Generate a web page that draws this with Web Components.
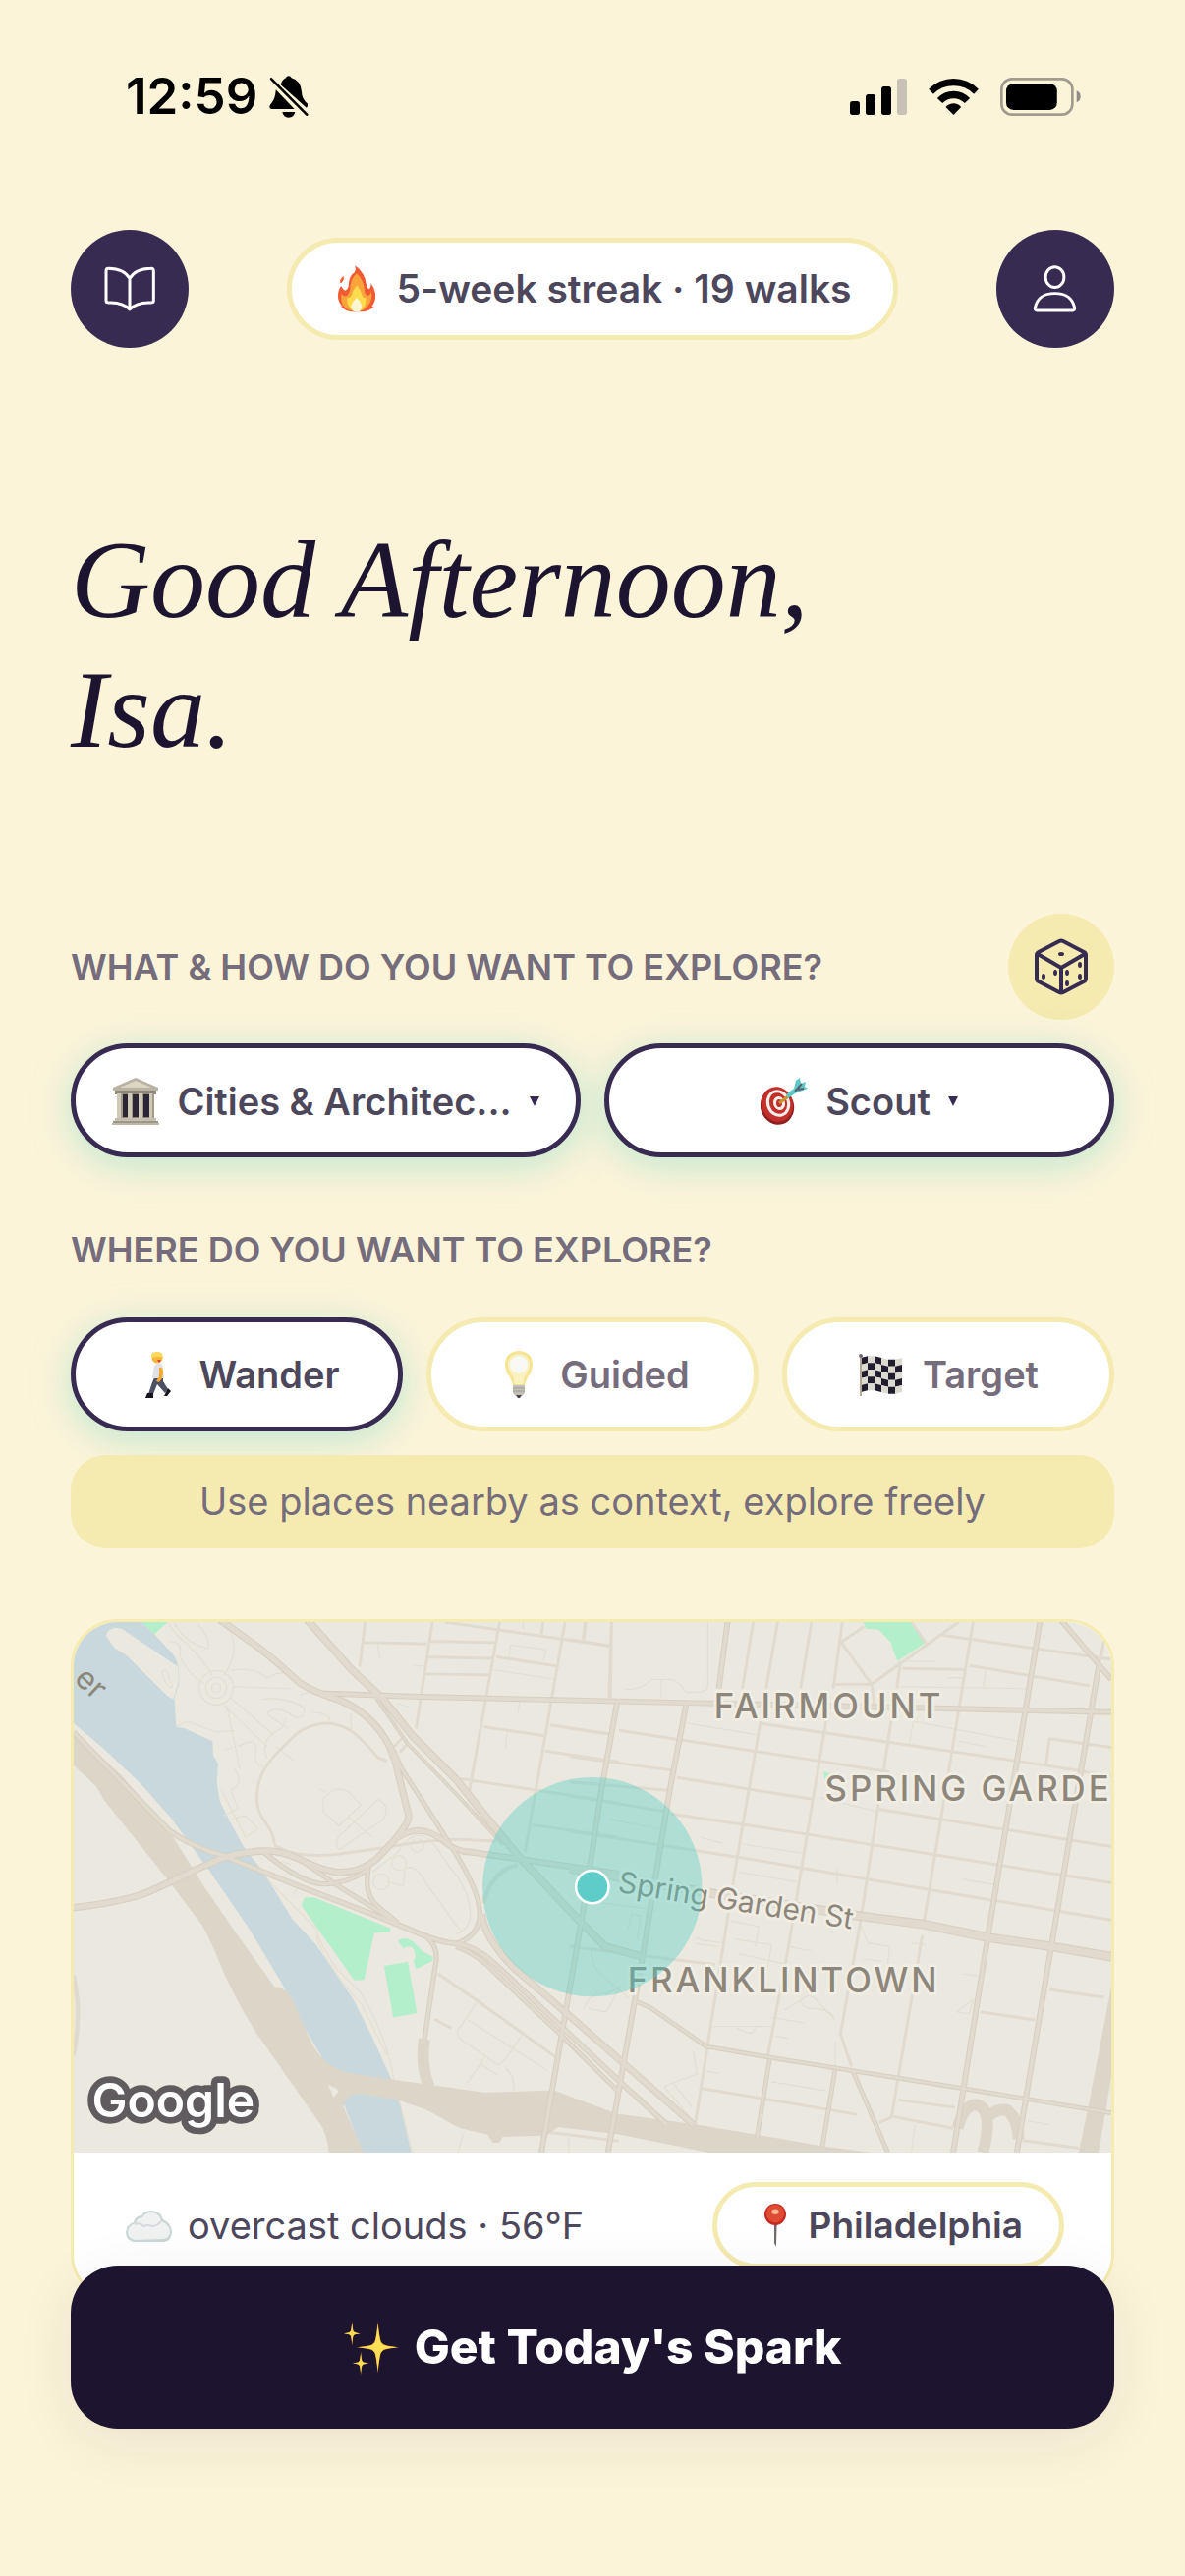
<!DOCTYPE html>
<html lang="en">
<head>
<meta charset="utf-8">
<meta name="viewport" content="width=device-width">
<title>Spark Walks</title>
<style>
  html, body { margin: 0; min-height: 100%; background: #fcf4d9; }
  body { font-family: Inter, "Noto Sans", sans-serif; color: #4d475c; }
</style>
</head>
<body>
<spark-app></spark-app>
<script>
const define = (name, html, setup) => customElements.define(name, class extends HTMLElement {
  connectedCallback() {
    if (this.shadowRoot) return;
    const root = this.attachShadow({ mode: 'open' });
    const t = document.createElement('template');
    t.innerHTML = typeof html === 'function' ? html(this) : html;
    root.append(t.content.cloneNode(true));
    if (setup) setup(this, root);
  }
});

/* ---------- icons ---------- */
const star = (x, y, w, h) => {
  const a = w * .2, b = h * .17;
  return `M${x} ${y - h}Q${x + a * .5} ${y - b} ${x + a} ${y - b}Q${x + a} ${y - b * .4} ${x + w} ${y}Q${x + a} ${y + b * .4} ${x + a} ${y + b}Q${x + a * .5} ${y + b} ${x} ${y + h}Q${x - a * .5} ${y + b} ${x - a} ${y + b}Q${x - a} ${y + b * .4} ${x - w} ${y}Q${x - a} ${y - b * .4} ${x - a} ${y - b}Q${x - a * .5} ${y - b} ${x} ${y - h}Z`;
};
const flag = () => {
  let s = '';
  const wave = x => 2 * Math.sin((x - 3) / 42 * Math.PI * 2);
  for (let r = 0; r < 5; r++) for (let c = 0; c < 6; c++) {
    const x = 3 + c * 7, x2 = x + 7, y = 7 + r * 7, a = wave(x), b = wave(x2);
    s += `<path d="M${x} ${y - a}L${x2} ${y - b}V${y + 7 - b}L${x} ${y + 7 - a}Z" fill="${(r + c) % 2 ? '#dddad2' : '#211d2c'}"/>`;
  }
  return s;
};
const ICONS = {
  bell: ['643 50 120 130', `<path d="M678 78Q682 61 694 57Q695 51 702 51Q709 51 711 57Q738 64 742 98Q743 122 760 136Q762 144 757 149ZM663 93L720 153H652Q642 153 644 144Q645 139 650 134Q661 122 663 93ZM683 162H722Q719 179 702 179Q686 179 683 162Z"/><path d="M649 60L758 170" stroke="#000" stroke-width="8" stroke-linecap="round"/>`],
  signal: ['45 57 174 111', `<rect x="45" y="126" width="30" height="42" rx="8"/><rect x="93" y="105" width="30" height="63" rx="8"/><rect x="141" y="81" width="30" height="87" rx="8"/><rect x="189" y="57" width="30" height="111" rx="8" fill="#c8c1b5"/>`],
  wifi: ['286 57 152 111', `<path d="M286 89Q318 57 362 57Q406 57 438 89L424 104Q398 79 362 79Q326 79 300 104ZM312 117Q333 95 362 95Q391 95 412 117L396 132Q382 118 362 118Q342 118 328 132ZM338 144Q348 133 362 133Q376 133 385 144L362 168Z"/>`],
  battery: ['504 54 247 117', `<rect x="508" y="58" width="217" height="109" rx="32" fill="none" stroke="#a19a8f" stroke-width="8"/><rect x="522" y="72" width="156" height="81" rx="22"/><path d="M738 94Q750 99 750 112Q750 125 738 130Z" fill="#8f8988"/>`],
  book: ['138 632 156 138', `<path d="M216 670Q200 640 151 639Q144 639 144 647V736Q144 743 152 743Q195 741 216 764Q237 741 280 743Q289 743 289 736V647Q289 638 281 639Q232 640 216 670V764" fill="none" stroke="#fff" stroke-width="9" stroke-linejoin="round"/>`],
  person: ['602 626 140 152', `<ellipse cx="672" cy="666" rx="28.500" ry="31.500" fill="none" stroke="#fff" stroke-width="9"/><path d="M617 769Q609 769 611 760Q620 716 672 716Q724 716 733 760Q735 769 727 769Z" fill="none" stroke="#fff" stroke-width="9"/>`],
  dice: ['0 0 54 58', `<g fill="none" stroke="#382b52" stroke-width="4" stroke-linejoin="round"><path d="M25 3Q27 2 29 3L50 14Q52 15 52 17V41Q52 43 50 44L29 55Q27 56 25 55L4 44Q2 43 2 41V17Q2 15 4 14ZM3 16L27 30L51 16M27 30V55"/></g><g fill="#382b52"><ellipse cx="27" cy="16" rx="3" ry="2"/><ellipse cx="9" cy="39" rx="2" ry="3"/><ellipse cx="21" cy="35" rx="2" ry="3"/><ellipse cx="33" cy="35" rx="2" ry="3"/><ellipse cx="33" cy="46" rx="2" ry="3"/><ellipse cx="46" cy="27" rx="2" ry="3"/><ellipse cx="46" cy="39" rx="2" ry="3"/></g>`],
  fire: ['840 629 144 144', `<path d="M907 630Q938 652 942 690Q944 700 950 702Q957 696 955 683Q966 697 969 715Q971 740 958 755L965 754Q950 771 925 771H895Q875 768 862 752L870 755Q854 742 855 718Q857 700 865 692Q870 705 878 706Q888 700 888 682Q890 660 906 650Q911 642 907 630Z" fill="#f15a32"/><path d="M873 662Q874 674 866 682Q862 686 861 679Q862 668 873 662Z" fill="#f15a32"/><path d="M912 654Q932 672 935 700Q937 722 947 722Q956 718 957 708Q962 735 947 752Q935 770 912 770Q885 770 871 752Q862 738 866 716Q872 726 882 722Q893 712 893 690Q896 668 912 654Z" fill="#f9a33b"/><path d="M913 690Q926 708 930 724Q935 731 940 728Q942 750 930 762Q912 775 893 762Q880 748 884 728Q892 730 897 718Q902 702 913 690Z" fill="#fddb4d"/><path d="M912 728Q930 745 927 760Q924 771 911 771Q898 771 895 759Q894 745 912 728Z" fill="#fdf6d2"/>`],
  temple: ['0 0 48 48', `<path d="M24 0L47 10V13H1V10Z" fill="#b9b3a4"/><path d="M24 3L40 10H8Z" fill="#dcd6c2"/><path d="M3 13H45V17H3Z" fill="#8f897c"/><path d="M5 17H43V41H5Z" fill="#8d8678"/><path d="M11 17H16V40H11ZM21 17H27V40H21ZM32 17H38V40H32Z" fill="#2a2635"/><g fill="#cfc9b8"><path d="M5 16H11V42H5ZM16 16H21V42H16ZM27 16H32V42H27ZM38 16H43V42H38Z"/></g><g fill="#a29b8c"><path d="M9 16H11V42H9ZM20 16H21V42H20ZM31 16H32V42H31ZM41 16H43V42H41Z"/></g><path d="M3 41H45V44H3Z" fill="#c5bfae"/><path d="M1 44H47V46H1Z" fill="#9d978a"/><path d="M0 46H48V48H0Z" fill="#bdb7a7"/>`],
  dart: ['0 0 48 48', `<ellipse cx="17" cy="29" rx="17" ry="19" transform="rotate(-18 17 29)" fill="#8d1f1e"/><ellipse cx="17" cy="27" rx="16" ry="18" transform="rotate(-18 17 27)" fill="#c3302b"/><ellipse cx="18" cy="26" rx="12" ry="14" transform="rotate(-18 18 26)" fill="#f4eeea"/><ellipse cx="18" cy="26" rx="9" ry="11" transform="rotate(-18 18 26)" fill="#c3302b"/><ellipse cx="19" cy="26" rx="6" ry="7" transform="rotate(-18 19 26)" fill="#f4eeea"/><ellipse cx="19" cy="26" rx="3" ry="4" fill="#c3302b"/><path d="M19 26L28 19" stroke="#c9942c" stroke-width="3"/><path d="M26 17L34 11L36 3L40 0L41 6L46 4L45 9L48 11L40 14L35 16L28 21Z" fill="#5cc9c6"/><path d="M35 14L42 6M38 12L44 11" stroke="#59606f" stroke-width="2"/>`],
  walker: ['0 0 48 48', `<path d="M22 25L19 32L15 44H20L24 34L32 43L35 39L30 31L30 25Z" fill="#4c5062"/><path d="M12 48L14 43H20V48H12ZM31 46L35 38L38 41L34 46Z" fill="#16131d"/><path d="M23 13Q30 11 30 18L31 28H19L20 22Q20 15 23 13Z" fill="#dfe1e6"/><path d="M26 17Q30 16 30 22L29 28L26 32L23 31L26 26Z" fill="#f2a92f"/><circle cx="24" cy="7" r="5.500" fill="#f7b53c"/><path d="M18 7Q17 1 23 1Q30 0 30 7Q29 9 28 6Q24 6 18 7Z" fill="#fbd75b"/><path d="M24 9H28L26 12Z" fill="#d9423a"/>`],
  bulb: ['0 0 48 48', `<path d="M24 0Q10 1 10 14Q10 21 15 27Q17 31 18 35H30Q31 31 33 27Q38 21 38 14Q38 1 24 0Z" fill="#f5e493"/><path d="M24 3Q13 4 13 14Q13 20 18 26L20 34H28L30 26Q35 20 35 14Q35 4 24 3Z" fill="#faf1c0"/><circle cx="24" cy="14" r="9" fill="#f8f8f4"/><path d="M18 35H30V43L27 46H21L18 43Z" fill="#c4c0b9"/><path d="M18 38H30M18 41H30" stroke="#a09b94"/><path d="M21 45H27L25 48H23Z" fill="#4b4750"/>`],
  flag: ['0 0 48 48', flag() + `<path d="M3 5V46" stroke="#b5a898" stroke-width="2"/><circle cx="3" cy="5" r="2" fill="#6e6a78"/>`],
  cloud: ['0 0 48 48', `<path d="M9 41Q1 39 1 31Q2 23 9 21Q10 15 17 14Q20 9 28 9Q37 10 39 18Q47 22 48 30Q48 40 40 41Z" fill="#cbd7d7"/><path d="M10 39Q3 37 3 31Q4 24 11 22Q12 17 18 16Q21 11 28 11Q36 12 37 20Q45 23 46 30Q46 37 39 38Z" fill="#f0f1f1"/><path d="M10 23Q15 21 19 25Q23 23 28 25Q34 24 37 20" fill="none" stroke="#d5d9db" stroke-width="2"/>`],
  pin: ['0 0 48 48', `<path d="M23 18H26L25 47H24Z" fill="#8b8580"/><path d="M24 18V45" stroke="#6b6563" stroke-width="2"/><ellipse cx="24" cy="12" rx="12" ry="12" fill="#c42a22"/><ellipse cx="24" cy="11" rx="10" ry="10" fill="#e04b33"/><ellipse cx="24" cy="9" rx="4" ry="3" fill="#f6b48e"/>`],
  sparkles: ['718 390 170 170', `<g fill="#d98f2c"><path d="${star(743, 433, 26, 38)}"/><path d="${star(823, 476, 66, 80)}"/><path d="${star(770, 525, 26, 36)}"/></g><g fill="#ffdf56"><path d="${star(743, 433, 24, 32)}"/><path d="${star(823, 476, 60, 72)}"/><path d="${star(770, 525, 24, 30)}"/><circle cx="823" cy="476" r="18"/><circle cx="743" cy="433" r="7"/><circle cx="770" cy="525" r="7"/></g>`]
};
define('ui-icon', el => {
  const [box, art] = ICONS[el.getAttribute('name')];
  return `<style>:host{display:block;flex:none;width:48px;height:48px}svg{display:block;width:100%;height:100%}</style><svg viewBox="${box}" aria-hidden="true">${art}</svg>`;
});

/* ---------- bars and headings ---------- */
define('status-bar', `<style>
  :host{display:flex;align-items:center;justify-content:space-between;height:196px;padding:0 34px 0 56px;color:#000}
  .side{display:flex;align-items:center}
  .time{font-size:51px;font-weight:600;line-height:60px;margin-right:12px}
  .bell{width:40px;height:43px}.signal{width:58px;height:37px}.wifi{width:51px;height:37px}.battery{width:82px;height:39px}
  .right{gap:22px}
</style>
<div class="side"><span class="time">12:59</span><ui-icon class="bell" name="bell"></ui-icon></div>
<div class="side right"><ui-icon class="signal" name="signal"></ui-icon><ui-icon class="wifi" name="wifi"></ui-icon><ui-icon class="battery" name="battery"></ui-icon></div>`);

define('round-button', el => `<style>
  :host{display:block}
  button{display:flex;align-items:center;justify-content:center;width:var(--size,120px);height:var(--size,120px);border:0;border-radius:50%;padding:0;background:var(--fill,#382b52)}
  ui-icon{width:var(--icon-w,52px);height:var(--icon-h,50px)}
</style><button type="button" aria-label="${el.getAttribute('label')}"><ui-icon name="${el.getAttribute('icon')}"></ui-icon></button>`);

define('streak-badge', `<style>
  :host{display:flex;align-items:center;gap:16px;box-sizing:border-box;height:104px;padding:0 42px;border:5px solid #f5eab0;border-radius:52px;background:#fff;font-size:39px;font-weight:600;line-height:48px;white-space:nowrap}
</style><ui-icon name="fire"></ui-icon><span><slot></slot></span>`);

define('app-header', `<style>:host{display:flex;align-items:center;justify-content:space-between;margin-top:38px}</style><slot></slot>`);

define('greeting-title', `<style>
  h1{margin:170px 0 142px;font:italic 400 112px/132px "Liberation Serif",serif;color:#1d1430}
</style><h1><slot></slot></h1>`);

define('section-label', `<style>
  :host{display:flex;align-items:center;justify-content:space-between}
  h2{margin:0;font-size:36px;line-height:44px;font-weight:600;color:#756c7c;text-transform:uppercase}
</style><h2><slot></slot></h2><slot name="action"></slot>`);

/* ---------- choices ---------- */
define('choice-row', `<style>
  :host{display:grid;grid-auto-flow:column;grid-auto-columns:minmax(0,1fr);gap:24px}
</style><slot></slot>`);

define('choice-select', el => `<style>
  :host{display:block}
  label{display:flex;align-items:center;justify-content:center;box-sizing:border-box;height:116px;padding:2px 22px 0;border:5px solid #382b52;border-radius:58px;background:#fff;box-shadow:0 8px 40px rgba(78,205,196,.35)}
  select{appearance:none;min-width:0;field-sizing:content;margin:0 18px;padding:0;border:0;background:none;font:600 38px/48px Inter,sans-serif;color:#4d475c;text-overflow:ellipsis}
  i{width:0;border:5px solid transparent;border-top:10px solid #382b52;border-bottom:0}
</style><label><ui-icon name="${el.getAttribute('icon')}"></ui-icon>
<select aria-label="${el.getAttribute('label')}"><option>${el.getAttribute('value')}</option></select><i></i></label>`);

define('choice-button', el => `<style>
  :host{display:block}
  button{display:flex;align-items:center;justify-content:center;gap:18px;box-sizing:border-box;width:100%;height:116px;padding:0;border:5px solid #f5eab0;border-radius:58px;background:#fff;font:600 38px/48px Inter,sans-serif;color:#756c7c}
  button[aria-pressed=true]{border-color:#382b52;color:#4d475c;box-shadow:0 8px 40px rgba(78,205,196,.35)}
</style><button type="button" aria-pressed="${el.hasAttribute('selected')}"><ui-icon name="${el.getAttribute('icon')}"></ui-icon><span><slot></slot></span></button>`);

define('hint-bar', `<style>
  :host{display:block;position:relative;padding:23px 36px 24px;border-radius:36px;background:#f5eab0;color:#756c7c;font-size:38px;line-height:48px;text-align:center}
  p{margin:0}
</style><p><slot></slot></p>`);

/* ---------- map ---------- */
const RIGHT = 1433; // x origin of the eastern half
const ROADS = [
  ['M470 50L560 115Q610 150 690 225Q740 255 800 272Q890 310 935 395Q955 440 960 470L990 590Q990 620 900 710Q850 750 790 745Q750 740 690 710Q640 685 590 687Q530 690 480 705L400 740Q280 800 240 812Q150 835 67 843', 20],
  ['M710 50L830 185L920 270L1000 370L1120 490L1200 590L1300 710L1460 880L1530 950L1640 980', 22],
  ['M900 265L985 390L1130 540L1250 670', 10],
  ['M750 253L1000 262L1568 275L2923 305', 16],
  ['M940 395L970 460L1060 600L1110 680Q1180 790 1185 850Q1190 920 1120 942', 14],
  ['M960 650Q1020 610 1080 655Q1120 690 1160 690L1300 710L1568 750', 18],
  ['M67 360L330 630Q390 675 480 700L690 785L900 865L1020 915Q1080 940 1120 942Q1180 950 1240 1010L1420 1180L1580 1330L1700 1440', 16],
  ['M1120 950Q1180 970 1230 1025L1400 1185L1568 1350', 14],
  ['M1190 860Q1200 930 1280 1010L1420 1130L1568 1260L1773 1440', 20],
  ['M690 710L790 780L960 885M590 690Q700 780 760 778Q830 775 880 735Q865 800 900 835L960 885', 14],
  ['M1040 925Q1070 950 1065 990L1033 1205', 14],
  ['M1563 280L1520 520L1470 850L1425 1110L1380 1370L1355 1517', 16],
  ['M1868 50L1843 240M1753 285L1708 520L1633 980L1583 1260L1538 1517', 16],
  ['M2728 50L2583 925L2488 1517M2888 180L2758 950L2663 1517M2783 50L2923 215', 16],
  ['M1613 1100L1658 1120L1808 1225L1983 1255L2513 1340L2923 1408', 13],
  ['M1983 1260L1948 1475M2163 1290L2128 1500M2213 1295L2308 1517', 13],
  ['M1433 735L1800 800L2223 865L2413 890L2583 925L2758 950L2923 978', 26]
];
const MINOR = `M620 668Q620 640 590 600Q560 560 580 490Q590 460 620 425L680 365Q750 315 820 350Q850 365 905 430L930 440M620 670Q680 710 800 695L920 678Q1050 655 1130 655L1230 660M1070 1025L1180 1100L1395 1255M950 400L975 372M965 415L990 388M1060 1150L1108 1175
M870 57L855 180M1055 57L1010 350M1240 57L1155 530M1420 57L1310 690M1360 57L1355 90M1475 57L1470 105M1548 57L1545 265M865 113L1040 117M1090 57L1545 123M1045 110L1225 113M1040 153L1220 157M1230 152L1395 178M1035 200L1210 203M1195 345L1365 370M1380 340L1545 365M1365 412L1568 442M1130 488L1345 520L1568 555M1330 615L1568 650M1370 1460L1568 1485`;
const MINOR_R = `M0 350L110 365M135 355L690 440L880 470M530 337L1235 440L1490 480M0 427L280 465M295 485L670 545M280 585L660 642L1490 775M0 497L270 520M0 535L260 578M850 572L1490 675M0 632L470 705L850 770L1490 877M915 185L1090 188M1100 177L1430 232M1020 92L1490 160M730 228H830L1070 57M745 110L830 228M750 110L810 70M940 57L980 115M1310 450L1320 378L1490 402M1320 1068L1470 1090M1130 1130L1280 1152M360 1340L790 1412M905 1372L1060 1393M890 1418L1055 1450M1245 1483L1400 1505
M505 57L475 240M572 57L540 240M665 57L635 240M750 57L725 240M525 330L455 740L345 1440M705 330L600 960L545 1250M885 325L800 880L745 1190L775 1280M910 165L900 240M1110 57L975 880M970 920L885 1420L850 1435M45 57L38 105M115 57L108 265M0 105L110 122M0 950L400 1000M830 228L840 290M1470 110L1455 180`;
const THIN = `M327 60L350 90Q420 150 450 205M330 110Q370 110 360 150Q380 200 425 225M345 60Q380 120 440 130Q440 90 410 65M480 205Q520 150 505 100Q490 60 455 50M500 190Q560 180 600 210Q640 190 660 200M505 235L665 240M500 265L620 370M480 285L600 400M490 290L525 460M350 345L380 330L460 360L510 355M310 195Q325 180 330 210L340 235Q325 245 310 195M585 270Q640 260 700 290Q710 320 680 320Q620 280 600 310Q640 340 660 350M690 260Q720 240 740 260M725 305Q780 310 770 330M830 310L832 355M650 320Q650 350 620 360Q580 390 600 430M510 460Q540 500 500 520L520 570L480 590M520 400Q570 370 570 410Q560 450 590 455M475 520L540 650L575 625L540 590L500 600M745 515L760 525M790 515L755 540V580L798 618L858 560L830 530Q815 515 790 518M905 545L795 650Q785 680 800 683L920 600Q940 560 905 545M820 590L890 650M600 765L735 900Q740 930 790 1010L860 1080Q930 1200 950 1320L1000 1517M735 920Q760 1000 860 1110L930 1250M890 745L960 690Q1010 610 1060 670L1110 740Q1160 800 1160 870Q1150 910 1120 915M980 735L975 785L930 770M980 735Q1010 720 1040 780L1135 910M1180 1100L1125 1180Q1120 1200 1140 1210L1235 1275Q1250 1275 1300 1195M1150 1150L1370 1290M1200 1255L1150 1325M1190 1275L1235 1305M1255 1285Q1280 1300 1280 1345M1430 1475V1517M1140 1465L1125 1517M1265 165L1270 120L1368 133L1360 165M1220 188L1390 214M1305 57V78M1295 275L1290 308M1260 360L1256 408M905 118L910 160M1005 178H1030M955 280L990 290M640 715L665 725M620 720L655 735M670 810L690 780L710 790M480 410L505 402M625 400L675 440`;
const THIN_R = `M380 57V230Q380 250 350 250H320Q295 215 280 215H225Q190 250 150 240M252 215V265M1145 188L1138 235M910 235L1255 240M1040 210H1085M915 165H1010M320 335L520 368M945 330L935 390M945 330L1235 385M1070 385L1145 400M690 540L845 578M475 668L640 693M465 745L625 772M735 735V775M1080 765L1170 780M110 600L270 630M360 650L420 665M90 830L240 850M160 900L170 862L195 865L185 930M340 935Q350 920 360 932L420 940M345 942L410 950M445 880L520 895L510 950M455 930L555 945L545 1010M465 970L600 1000M600 950L665 962M800 890L820 940L880 950L875 1000M810 985L860 990M60 960Q60 1010 90 1030L160 1090M40 1120Q60 1070 100 1080L140 1060L100 1130L50 1120M555 1145L645 1160M565 1195L600 1203M590 1125L640 1095Q660 1070 690 1110L730 1150M635 1085Q630 1115 660 1120Q720 1120 728 1150M390 1170L565 1170M510 1170Q510 1190 490 1188L460 1175M375 1292L412 1300M555 1322L705 1347M340 1240L350 1300L260 1335L330 1420M280 1320L335 1390M730 1210V1280M1065 1130L1110 1095L1100 1135L1065 1130M1080 1025L1120 1030M950 1440L940 1517M1260 1430L1320 1440M940 940L980 945`;
const cased = ROADS.map(([d, w]) => `<path d="${d}" stroke="#d6d0c1" stroke-width="${w}"/>`).join('') +
  ROADS.map(([d, w]) => `<path d="${d}" stroke="#e0dbce" stroke-width="${w - 6}"/>`).join('');

define('city-map', `<style>
  :host{display:block}
  svg{display:block;width:100%;height:540px;background:#ebe8df;font-family:Inter,sans-serif}
  .area{font-size:94px;font-weight:500;letter-spacing:8px}
  .street{font-size:81px}
  .river{font-size:86px;stroke:none}
  .names{fill:#8d877b;stroke:#f0ede3;stroke-width:16px;stroke-linejoin:round;paint-order:stroke}
  .brand{font:600 130px Inter,sans-serif;fill:#fff;stroke:#605b5e;stroke-width:36px;stroke-linejoin:round;paint-order:stroke}
</style>
<svg viewBox="67 57 2857 1460" preserveAspectRatio="xMidYMid slice" role="img" aria-label="Map of Philadelphia">
  <path fill="#c9d8dd" d="M67 57H255L290 90L345 150Q362 180 357 230L345 265L350 345L375 350L400 362L450 385L452 425L465 445L462 500L470 550L500 610L535 675L590 745L670 875L735 945L840 1100L890 1200L940 1310L965 1380L997 1517H862L810 1380L755 1262L690 1150L640 1050L550 900L440 740L335 595L250 500L150 405L67 335Z"/>
  <path fill="#ebe8df" d="M157 95Q162 68 200 75L355 180L357 220L342 270L325 260L215 150L180 128Z"/>
  <path fill="#b3efcb" d="M255 57H327L290 90ZM703 815L730 815L940 900L938 910L895 913L867 1042L840 1043L695 838ZM922 1003L987 992L1013 1133L947 1145ZM960 935Q975 920 1000 935L1030 965L1057 978L1055 990L1010 1013L1003 990Q1015 975 1000 952Q985 948 975 955ZM2241 57H2375L2410 115L2335 165L2321 130L2318 115L2283 78L2248 75ZM2131 468L2150 475L2135 492Z"/>
  <g fill="none" stroke-linejoin="round">
    <g stroke="#e2ded1" stroke-width="3"><circle cx="460" cy="238" r="47"/><circle cx="460" cy="238" r="29"/><circle cx="460" cy="238" r="12"/><circle cx="914" cy="772" r="22"/><circle cx="963" cy="720" r="20"/><circle cx="1013" cy="672" r="18"/><path d="${THIN}"/><path transform="translate(${RIGHT} 0)" d="${THIN_R}"/></g>
    <g stroke="#e0dbce" stroke-width="8"><path d="${MINOR}"/><path transform="translate(${RIGHT} 0)" d="${MINOR_R}"/></g>
    <path stroke="#e0dbce" stroke-width="12" d="M1195 830Q1220 740 1290 725M67 1030Q92 1130 67 1250"/>
  </g>
  <g fill="#dcd6c9">
    <path fill-rule="evenodd" d="M67 358L200 480L330 630L380 710L430 790L520 920L620 1060Q655 1062 672 1100L720 1210Q760 1290 840 1300L960 1318L1060 1332L1200 1352L1390 1345L1433 1362L1563 1410L1783 1440L1933 1465L2133 1500L2263 1517H1813L1733 1500L1568 1467L1400 1447L1370 1470L1248 1474L1240 1490L1222 1490L1205 1466Q1160 1460 1120 1445L1040 1400L960 1372L850 1355Q815 1360 810 1390L865 1517H770Q765 1460 740 1430L600 1230Q540 1150 480 1020Q430 900 420 890L330 770L150 545L130 510L67 450ZM768 1330L800 1345L783 1365Z"/>
    <path d="M2923 1060V1310L2888 1517H2833L2858 1400Z"/>
    <path fill="none" stroke="#dcd6c9" stroke-width="32" d="M1033 1205Q1022 1270 1045 1335M2500 1450Q2520 1380 2555 1386Q2600 1400 2570 1517M2575 1430Q2600 1395 2635 1400Q2665 1420 2668 1480"/>
  </g>
  <g fill="none" stroke-linejoin="round">${cased}</g>
  <g class="names">
    <text class="area" x="1830" y="323">FAIRMOUNT</text>
    <text class="area" x="2135" y="550">SPRING GARDE</text>
    <text class="area" x="1592" y="1077">FRANKLINTOWN</text>
    <text class="street" transform="translate(1563 800) rotate(9)">Spring Garden St</text>
    <text class="river" transform="translate(66 218) rotate(43)">er</text>
  </g>
  <circle cx="1495" cy="786" r="302" fill="#4ecdc4" fill-opacity=".38"/>
  <circle cx="1495" cy="786" r="45" fill="#5ecdc9" stroke="#fff" stroke-width="7"/>
  <text class="brand" x="118" y="1420">Google</text>
</svg>`);

define('map-card', `<style>
  :host{display:block;margin-top:72px;border:3px solid #f5eab0;border-radius:48px;background:#fff;overflow:hidden}
  footer{display:flex;align-items:center;justify-content:space-between;padding:30px 48px}
  .weather{display:flex;align-items:center;gap:16px;margin:0;padding-left:4px;font-size:38px;line-height:48px}
</style><city-map></city-map>
<footer><p class="weather"><ui-icon name="cloud"></ui-icon><slot name="weather"></slot></p><slot name="place"></slot></footer>`);

define('place-button', `<style>
  :host{display:block}
  button{display:flex;align-items:center;gap:12px;height:88px;padding:0 37px;border:5px solid #f5eab0;border-radius:44px;background:#fff;font:600 37px/44px Inter,sans-serif;color:#4d475c}
  ui-icon{width:44px;height:44px}
</style><button type="button"><ui-icon name="pin"></ui-icon><span><slot></slot></span></button>`);

/* floats over the scrolled content at the foot of the screen */
define('spark-button', `<style>
  :host{display:block;position:fixed;left:72px;right:72px;bottom:150px}
  button{display:flex;align-items:center;justify-content:center;gap:16px;width:100%;height:166px;padding:0;border:0;border-radius:48px;background:#1d1430;color:#fff;font:800 48px/58px Inter,sans-serif;box-shadow:0 12px 60px rgba(24,36,32,.08)}
  ui-icon{width:56px;height:56px}
</style><button type="button"><ui-icon name="sparkles"></ui-icon><span><slot></slot></span></button>`);

define('spark-app', `<style>
  :host{display:block;padding:0 72px 150px}
  .dice{--size:108px;--fill:#f5eab0;--icon-w:54px;--icon-h:58px}
  .person{--icon-w:47px}
  choice-row{margin:24px 0 72px}
  .modes{margin:47px 0 24px}
</style>
<status-bar></status-bar>
<app-header>
  <round-button icon="book" label="Journal"></round-button>
  <streak-badge>5-week streak · 19 walks</streak-badge>
  <round-button class="person" icon="person" label="Profile"></round-button>
</app-header>
<greeting-title>Good Afternoon,<br>Isa.</greeting-title>
<section-label>What &amp; how do you want to explore?<round-button slot="action" class="dice" icon="dice" label="Shuffle"></round-button></section-label>
<choice-row>
  <choice-select icon="temple" label="Theme" value="Cities &amp; Architec..."></choice-select>
  <choice-select icon="dart" label="Style" value="Scout"></choice-select>
</choice-row>
<section-label>Where do you want to explore?</section-label>
<choice-row class="modes">
  <choice-button icon="walker" selected>Wander</choice-button>
  <choice-button icon="bulb">Guided</choice-button>
  <choice-button icon="flag">Target</choice-button>
</choice-row>
<hint-bar>Use places nearby as context, explore freely</hint-bar>
<map-card><span slot="weather">overcast clouds · 56°F</span><place-button slot="place">Philadelphia</place-button></map-card>
<spark-button>Get Today's Spark</spark-button>`);
</script>
</body>
</html>
